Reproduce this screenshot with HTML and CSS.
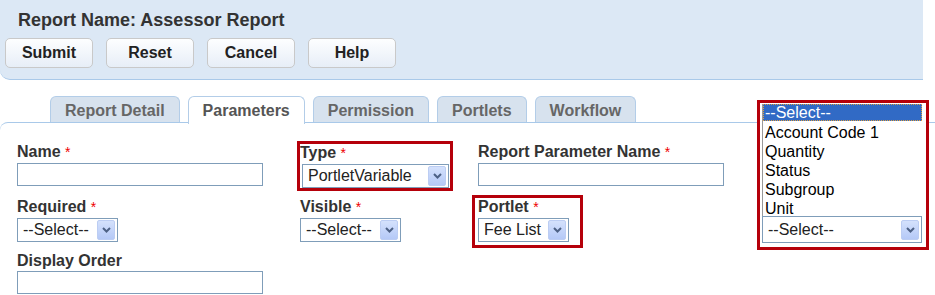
FILE: index.html
```html
<!DOCTYPE html>
<html>
<head>
  <title>Assessor Report - Parameters</title>
  <link rel="stylesheet" href="styles.css">
</head>
<body>

  <!-- Report header with action buttons -->
  <div class="header">
    <h1>Report Name: Assessor Report</h1>
    <div class="buttons">
      <button>Submit</button>
      <button>Reset</button>
      <button>Cancel</button>
      <button>Help</button>
    </div>
  </div>

  <!-- Tabs -->
  <div class="tabs">
    <div class="tab">Report Detail</div>
    <div class="tab active">Parameters</div>
    <div class="tab">Permission</div>
    <div class="tab">Portlets</div>
    <div class="tab">Workflow</div>
  </div>

  <!-- Parameter form -->
  <div class="content">
    <div class="form">
      <div class="field">
        <label>Name <span class="req">*</span></label>
        <div class="text wide"></div>
      </div>
      <div class="field hl type">
        <label>Type <span class="req">*</span></label>
        <div class="select type-select"><span>PortletVariable</span><span class="arrow"><svg width="9" height="6" viewBox="0 0 9 6"><path d="M1 1 L4.5 4.5 L8 1" fill="none" stroke="#4d6185" stroke-width="2"/></svg></span></div>
      </div>
      <div class="field">
        <label>Report Parameter Name <span class="req">*</span></label>
        <div class="text wide"></div>
      </div>

      <div class="field">
        <label>Required <span class="req">*</span></label>
        <div class="select small"><span>--Select--</span><span class="arrow"><svg width="9" height="6" viewBox="0 0 9 6"><path d="M1 1 L4.5 4.5 L8 1" fill="none" stroke="#4d6185" stroke-width="2"/></svg></span></div>
      </div>
      <div class="field">
        <label>Visible <span class="req">*</span></label>
        <div class="select small"><span>--Select--</span><span class="arrow"><svg width="9" height="6" viewBox="0 0 9 6"><path d="M1 1 L4.5 4.5 L8 1" fill="none" stroke="#4d6185" stroke-width="2"/></svg></span></div>
      </div>
      <div class="field hl portlet">
        <label>Portlet <span class="req">*</span></label>
        <div class="select fee"><span>Fee List</span><span class="arrow"><svg width="9" height="6" viewBox="0 0 9 6"><path d="M1 1 L4.5 4.5 L8 1" fill="none" stroke="#4d6185" stroke-width="2"/></svg></span></div>
      </div>

      <div class="field">
        <label>Display Order</label>
        <div class="text wide"></div>
      </div>
    </div>

    <!-- Open dropdown of the variable select -->
    <div class="dropdown">
      <ul class="listbox">
        <li class="selected">--Select--</li>
        <li>Account Code 1</li>
        <li>Quantity</li>
        <li>Status</li>
        <li>Subgroup</li>
        <li>Unit</li>
      </ul>
      <div class="select full"><span>--Select--</span><span class="arrow"><svg width="9" height="6" viewBox="0 0 9 6"><path d="M1 1 L4.5 4.5 L8 1" fill="none" stroke="#4d6185" stroke-width="2"/></svg></span></div>
    </div>
  </div>

</body>
</html>
```

FILE: styles.css
```css
/* Page base */
body {
  margin: 0;
  font-family: "Liberation Sans", Arial, sans-serif;
  color: #333;
  background: #fff;
  width: 935px;
  height: 295px;
  overflow: hidden;
}

/* Header panel */
.header {
  width: 923px;
  height: 80px;
  box-sizing: border-box;
  background-color: #dce8f5;
  border-bottom: 1px solid #a9c9e9;
  border-bottom-left-radius: 10px;
  padding: 9px 0 0 5px;
}

.header h1 {
  margin: 0 0 0 13px;
  font-size: 18px;
  line-height: 22px;
  color: #333;
}

/* Action buttons */
.buttons {
  display: flex;
  gap: 13px;
  margin-top: 7px;
}

.buttons button {
  width: 88px;
  height: 30px;
  font-family: inherit;
  font-size: 16px;
  font-weight: bold;
  color: #222;
  border: 1px solid #c9c9c9;
  border-radius: 5px;
  background: linear-gradient(#fdfeff, #e7eef7);
  padding: 0;
}

/* Tab strip */
.tabs {
  display: flex;
  gap: 8px;
  padding-left: 50px;
  margin-top: 16px;
  height: 26px;
}

.tab {
  box-sizing: border-box;
  height: 27px;
  padding: 4px 14px 0;
  font-size: 16px;
  line-height: 19px;
  font-weight: bold;
  color: #666;
  background: #d7e2ee;
  border: 1px solid #b3cde8;
  border-bottom: none;
  border-radius: 6px 6px 0 0;
}

.tab.active {
  background: #fff;
  color: #555;
  height: 28px;
  position: relative;
  z-index: 1;
}

/* Content area under tabs */
.content {
  position: relative;
  border-top: 1px solid #a9c9e9;
  border-top-left-radius: 8px;
  padding: 20px 0 0 17px;
}

.form {
  display: grid;
  grid-template-columns: 283px 178px 250px;
  row-gap: 10px;
}

.field label {
  display: block;
  font-size: 16px;
  font-weight: bold;
  line-height: 17px;
  margin-bottom: 2px;
}

.req {
  color: #e00;
  font-size: 14px;
  font-weight: normal;
}

/* Highlighted fields */
.hl {
  outline: 3px solid #b5000a;
}

.type {
  width: 150px;
  margin-top: 1px;
}

.type-select {
  margin-left: 2px;
  width: 147px;
}

.portlet {
  width: 102px;
  margin-left: -3px;
  padding-left: 3px;
  padding-bottom: 3px;
  margin-bottom: -3px;
}

/* Text inputs */
.text {
  box-sizing: border-box;
  height: 23px;
  border: 1px solid #7f9db9;
  background: #fff;
}

.wide {
  width: 246px;
}

/* Select boxes */
.select {
  box-sizing: border-box;
  display: inline-flex;
  align-items: center;
  justify-content: space-between;
  height: 24px;
  border: 1px solid #7f9db9;
  padding: 1px 2px 1px 5px;
  font-size: 16px;
  color: #222;
  background: #fff;
  gap: 4px;
}

.select.small {
  width: 101px;
}

.select.fee {
  width: 91px;
}

.arrow {
  box-sizing: border-box;
  width: 18px;
  height: 20px;
  display: flex;
  align-items: center;
  justify-content: center;
  background: linear-gradient(#d4e1fc, #b5c9f7);
  border: 1px solid #bccdf3;
  border-radius: 2px;
}

/* Open dropdown overlay */
.dropdown {
  position: absolute;
  left: 757px;
  top: -23px;
  width: 164px;
  border: 3px solid #b5000a;
  background: #fff;
  padding: 1px 0 4px 2px;
}

.listbox {
  list-style: none;
  margin: 0;
  padding: 0;
  width: 159px;
  border-left: 1px solid #999;
  height: 112px;
}

.listbox li {
  font-size: 16px;
  line-height: 19px;
  height: 19px;
  padding-left: 2px;
  color: #000;
}

.listbox li.selected {
  background: #316ac5;
  color: #fff;
  outline: 1px dotted #e0a040;
  outline-offset: -1px;
  height: 17px;
  line-height: 17px;
  margin-bottom: 2px;
}

.select.full {
  width: 160px;
  height: 27px;
  margin-top: 0;
}
```
